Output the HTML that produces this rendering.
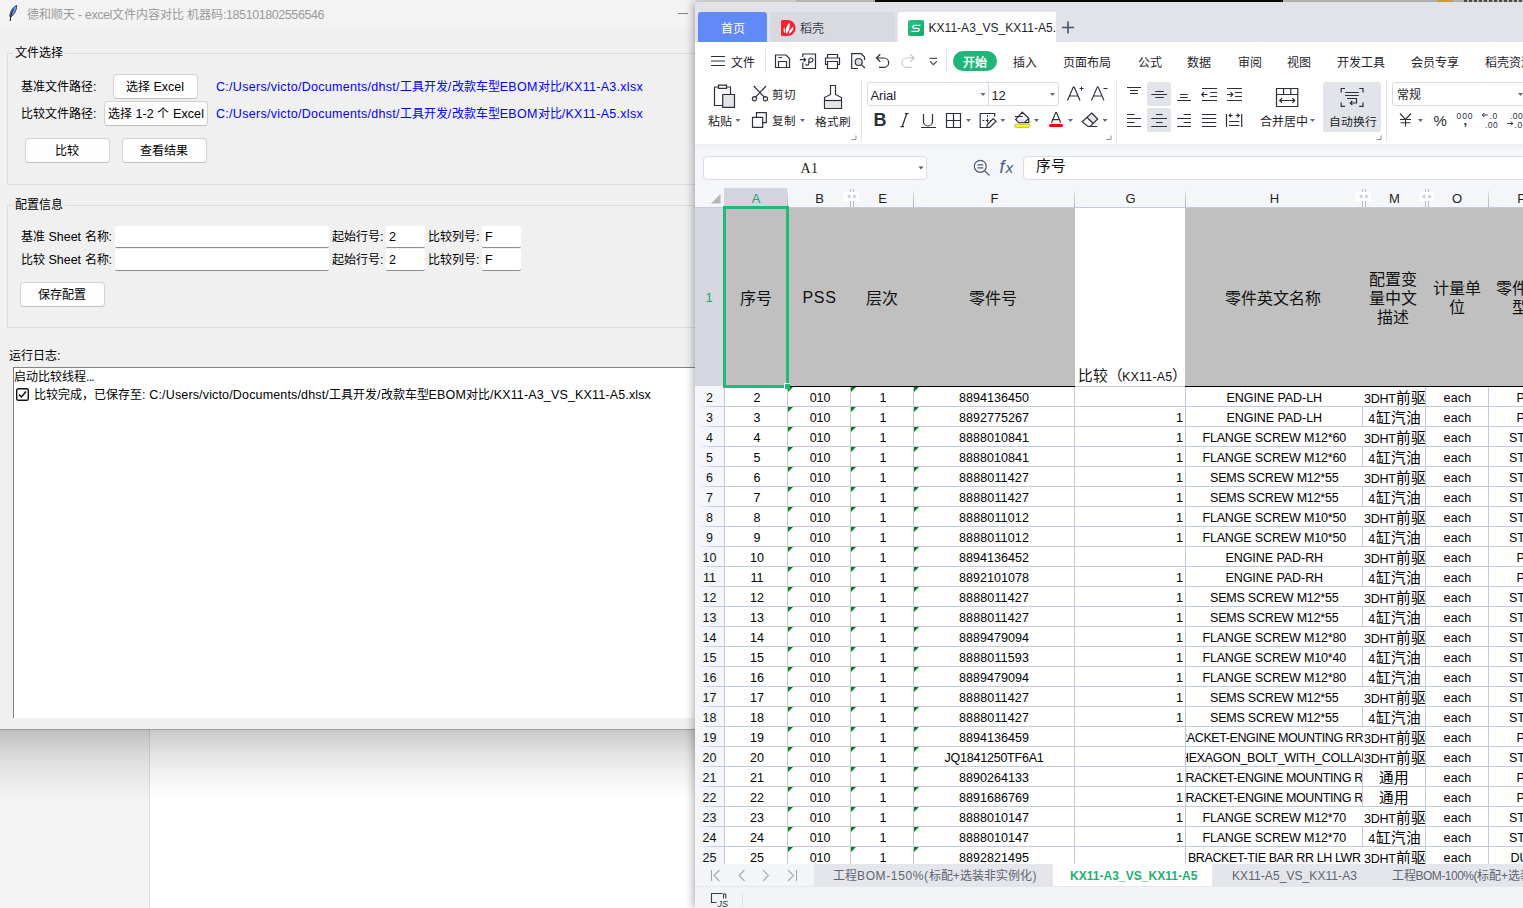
<!DOCTYPE html><html lang="zh-CN"><head><meta charset="utf-8"><title>ui</title><style>*{box-sizing:border-box;margin:0;padding:0}
html,body{width:1523px;height:908px;overflow:hidden;background:#fff}
body{font-family:"Liberation Sans",sans-serif;font-size:12px;color:#000;position:relative}
.a{position:absolute}
.t{position:absolute;white-space:nowrap;font-size:12px}
.k{display:inline-block;letter-spacing:0;white-space:nowrap;text-align:justify;text-align-last:justify;overflow:visible}
.k1{text-align:center;text-align-last:center}
/* desktop */
#side{left:0;top:700px;width:150px;height:208px;background:#f3f3f3;border-right:1px solid #dedede}
#sh{left:0;top:729px;width:700px;height:72px;background:linear-gradient(to bottom,rgba(0,0,0,.36) 0,rgba(0,0,0,.36) 1px,rgba(0,0,0,.215) 1.5px,rgba(0,0,0,.17) 15%,rgba(0,0,0,.115) 33%,rgba(0,0,0,.06) 58%,rgba(0,0,0,.02) 82%,rgba(0,0,0,0))}
#top0{left:0;top:0;width:1523px;height:3px;background:#e6e6e6}
/* tk window */
#tk{left:0;top:0;width:696px;height:729px;background:#f0f0f0;overflow:hidden;border-bottom-left-radius:7px}
#tk .title{left:0;top:0;width:696px;height:29px;background:#f3f3f3}
#tk .lf{border:1px solid #dcdcdc;border-right:none}
#tk .btn{position:absolute;background:#fdfdfd;border:1px solid #d2d2d2;border-bottom-color:#c0c0c0;border-radius:4px;height:25px}
#tk .ent{position:absolute;background:#fff;border-bottom:1px solid #8c8c8c;height:22px;border-radius:2px}
#tk .log{left:13px;top:367px;width:690px;height:351px;background:#fff;border-left:1px solid #828282;border-top:1px solid #828282}
/* wps */
#wps{left:695px;top:2px;width:828px;height:906px;background:#fff;overflow:hidden;box-shadow:-2px 0 8px rgba(0,0,0,.30)}
#pg{left:-695px;top:-2px;width:1523px;height:908px}
#pg svg{position:absolute;overflow:visible;fill:none;stroke:#2b303b;stroke-width:1.2}
#pg .dd{position:absolute;width:0;height:0;border-left:2.6px solid transparent;border-right:2.6px solid transparent;border-top:3.2px solid #5f6a82}
#pg .box{position:absolute;background:#fff;border:1px solid #d9dbe0;border-radius:3px}
#pg .hl{position:absolute;background:#e1e4e9;border-radius:2px}
#pg .sep{position:absolute;width:1px;background:#e3e5e9}
/* grid */
.row{position:absolute;left:695px;width:828px;height:20px}
.hln{position:absolute;left:724px;width:800px;height:1px;background:#c3c9de}
.cell{position:absolute;height:19px;line-height:19px;font-size:12.5px;white-space:nowrap;overflow:hidden;color:#000;text-align:center}
.vl{position:absolute;width:1px;background:#c3c9de}
.tri{position:absolute;width:0;height:0;border-top:5.5px solid #0a7f16;border-right:5.5px solid transparent}
.rh{position:absolute;left:695px;width:29px;text-align:center;font-size:12.5px;color:#111;line-height:19px;height:19px;z-index:2}
</style></head><body>
<div class="a" id="side"></div>
<div class="a" id="top0"><div class="a" style="left:796px;top:0;width:79px;height:2px;background:#cdcdcd"></div><div class="a" style="left:875px;top:0;width:408px;height:2px;background:#0a0a0a"></div><div class="a" style="left:1283px;top:0;width:240px;height:2px;background:#c9c9c9"></div><div class="a" style="left:1437px;top:0;width:16px;height:2px;background:#e3b341"></div><div class="a" style="left:1464px;top:0;width:59px;height:2px;background:repeating-linear-gradient(to right,#555 0,#555 3px,#c9c9c9 3px,#c9c9c9 5px)"></div></div>
<div class="a" id="sh"></div>
<div class="a" id="tk">
<div class="a title"></div>
<svg class="a" style="left:8px;top:5px" width="10" height="17" viewBox="0 0 10 17"><path d="M8.6.6C5.5 1.6 2.2 6 1.8 11.2L2.6 12C5.8 10.2 8.8 5.2 8.6.6Z" fill="#6ea4f0" stroke="#1b2a4a" stroke-width=".9"/><path d="M5.6 4.2C3.6 7.6 2.6 11 2.2 16" fill="none" stroke="#10131c" stroke-width="1"/></svg>
<div class="t" style="left:27px;top:6.5px;font-size:12.5px;line-height:16px;height:16px;letter-spacing:-0.421px;color:#9a9a9a;"><span class="k" style="width:48px;font-size:12px">德和顺天</span> - excel<span class="k" style="width:72px;font-size:12px">文件内容对比</span> <span class="k" style="width:36px;font-size:12px">机器码</span>:185101802556546</div>
<div class="a" style="left:678px;top:13px;width:10px;height:1px;background:#858585"></div>
<div class="a lf" style="left:7px;top:53px;width:700px;height:132px"></div>
<div class="t" style="left:13px;top:45px;font-size:12.5px;line-height:16px;height:16px;background:#f0f0f0;padding:0 2px;"><span class="k" style="width:48px;font-size:12px">文件选择</span></div>
<div class="t" style="left:21px;top:79px;font-size:12.5px;line-height:16px;height:16px;letter-spacing:-0.473px;"><span class="k" style="width:72px;font-size:12px">基准文件路径</span>:</div>
<div class="btn" style="left:113px;top:74px;width:85px"></div><div class="t" style="left:126px;top:79px;font-size:12.5px;line-height:16px;height:16px;letter-spacing:-0.007px;"><span class="k" style="width:24px;font-size:12px">选择</span> Excel</div>
<div class="t" style="left:216px;top:79px;font-size:12.5px;line-height:16px;height:16px;letter-spacing:0.293px;color:#0000ff;">C:/Users/victo/Documents/dhst/<span class="k" style="width:48px;font-size:12px">工具开发</span>/<span class="k" style="width:48px;font-size:12px">改款车型</span>EBOM<span class="k" style="width:24px;font-size:12px">对比</span>/KX11-A3.xlsx</div>
<div class="t" style="left:21px;top:106px;font-size:12.5px;line-height:16px;height:16px;letter-spacing:-0.473px;"><span class="k" style="width:72px;font-size:12px">比较文件路径</span>:</div>
<div class="btn" style="left:104px;top:101px;width:104px"></div><div class="t" style="left:108px;top:106px;font-size:12.5px;line-height:16px;height:16px;letter-spacing:0.086px;"><span class="k" style="width:24px;font-size:12px">选择</span> 1-2 <span class="k k1" style="width:12px;font-size:12px">个</span> Excel</div>
<div class="t" style="left:216px;top:106px;font-size:12.5px;line-height:16px;height:16px;letter-spacing:0.293px;color:#0000ff;">C:/Users/victo/Documents/dhst/<span class="k" style="width:48px;font-size:12px">工具开发</span>/<span class="k" style="width:48px;font-size:12px">改款车型</span>EBOM<span class="k" style="width:24px;font-size:12px">对比</span>/KX11-A5.xlsx</div>
<div class="btn" style="left:25px;top:138px;width:85px"></div><div class="t" style="left:55px;top:143px;font-size:12.5px;line-height:16px;height:16px;"><span class="k" style="width:24px;font-size:12px">比较</span></div>
<div class="btn" style="left:122px;top:138px;width:85px"></div><div class="t" style="left:140px;top:143px;font-size:12.5px;line-height:16px;height:16px;"><span class="k" style="width:48px;font-size:12px">查看结果</span></div>
<div class="a lf" style="left:7px;top:205px;width:700px;height:123px"></div>
<div class="t" style="left:13px;top:197px;font-size:12.5px;line-height:16px;height:16px;background:#f0f0f0;padding:0 2px;"><span class="k" style="width:48px;font-size:12px">配置信息</span></div>
<div class="t" style="left:21px;top:229px;font-size:12.5px;line-height:16px;height:16px;letter-spacing:-0.011px;"><span class="k" style="width:24px;font-size:12px">基准</span> Sheet <span class="k" style="width:24px;font-size:12px">名称</span>:</div>
<div class="ent" style="left:115px;top:226px;width:214px"></div>
<div class="t" style="left:332px;top:229px;font-size:12.5px;line-height:16px;height:16px;letter-spacing:-0.473px;"><span class="k" style="width:48px;font-size:12px">起始行号</span>:</div>
<div class="ent" style="left:386px;top:226px;width:39px"></div><div class="t" style="left:389px;top:229px;font-size:12.5px;line-height:16px;height:16px;">2</div>
<div class="t" style="left:428px;top:229px;font-size:12.5px;line-height:16px;height:16px;letter-spacing:-0.473px;"><span class="k" style="width:48px;font-size:12px">比较列号</span>:</div>
<div class="ent" style="left:482px;top:226px;width:39px"></div><div class="t" style="left:485px;top:229px;font-size:12.5px;line-height:16px;height:16px;">F</div>
<div class="t" style="left:21px;top:252px;font-size:12.5px;line-height:16px;height:16px;letter-spacing:-0.011px;"><span class="k" style="width:24px;font-size:12px">比较</span> Sheet <span class="k" style="width:24px;font-size:12px">名称</span>:</div>
<div class="ent" style="left:115px;top:249px;width:214px"></div>
<div class="t" style="left:332px;top:252px;font-size:12.5px;line-height:16px;height:16px;letter-spacing:-0.473px;"><span class="k" style="width:48px;font-size:12px">起始行号</span>:</div>
<div class="ent" style="left:386px;top:249px;width:39px"></div><div class="t" style="left:389px;top:252px;font-size:12.5px;line-height:16px;height:16px;">2</div>
<div class="t" style="left:428px;top:252px;font-size:12.5px;line-height:16px;height:16px;letter-spacing:-0.473px;"><span class="k" style="width:48px;font-size:12px">比较列号</span>:</div>
<div class="ent" style="left:482px;top:249px;width:39px"></div><div class="t" style="left:485px;top:252px;font-size:12.5px;line-height:16px;height:16px;">F</div>
<div class="btn" style="left:20px;top:282px;width:85px"></div><div class="t" style="left:38px;top:287px;font-size:12.5px;line-height:16px;height:16px;"><span class="k" style="width:48px;font-size:12px">保存配置</span></div>
<div class="t" style="left:9px;top:348px;font-size:12.5px;line-height:16px;height:16px;letter-spacing:-0.473px;"><span class="k" style="width:48px;font-size:12px">运行日志</span>:</div>
<div class="a log"></div>
<div class="t" style="left:14px;top:368.5px;font-size:12.5px;line-height:16px;height:16px;letter-spacing:-0.806px;"><span class="k" style="width:72px;font-size:12px">启动比较线程</span>...</div>
<svg class="a" style="left:16px;top:388px" width="13" height="13" viewBox="0 0 13 13"><rect x=".7" y=".7" width="11.6" height="11.6" rx="1.6" fill="#fff" stroke="#111" stroke-width="1.4"/><path d="M3 6.600L5.400 9L10 3.600" fill="none" stroke="#111" stroke-width="1.500"/></svg>
<div class="t" style="left:34px;top:386.5px;font-size:12.5px;line-height:16px;height:16px;letter-spacing:0.155px;"><span class="k" style="width:108px;font-size:12px">比较完成，已保存至</span>: C:/Users/victo/Documents/dhst/<span class="k" style="width:48px;font-size:12px">工具开发</span>/<span class="k" style="width:48px;font-size:12px">改款车型</span>EBOM<span class="k" style="width:24px;font-size:12px">对比</span>/KX11-A3_VS_KX11-A5.xlsx</div>
</div>
<div class="a" id="wps"><div class="a" id="pg">
<div class="a" style="left:695px;top:2px;width:828px;height:40px;background:#e1e3e8"></div>
<div class="a" style="left:698px;top:12px;width:69px;height:30px;background:#628af6;border-radius:3px 3px 0 0"></div>
<div class="t" style="left:721px;top:20.5px;font-size:12px;line-height:16px;height:16px;color:#fff;"><span class="k" style="width:24px">首页</span></div>
<div class="a" style="left:770px;top:12px;width:125px;height:30px;background:#d8dadf;border-radius:3px 3px 0 0"></div>
<svg style="left:781px;top:20px" width="16" height="16" viewBox="0 0 16 16"><path d="M0 1.500A1.500 1.500 0 0 1 1.500 0H6.500A8 8 0 0 1 6.500 16H1.500A1.500 1.500 0 0 1 0 14.500Z" fill="#f5222d" stroke="none"/><path d="M5.300 13.800C4 10.500 5.200 5.500 8.600 2.800C9.300 6.800 8.200 11.300 5.300 13.800ZM3.500 13C2.300 11.300 2.300 9 3.200 7.200C4.300 9 4.500 11.300 3.500 13ZM7.600 13.800C8 10.800 9.800 8 12.600 7C12.300 10 10.500 12.800 7.600 13.800Z" fill="#fff" stroke="none"/></svg>
<div class="t" style="left:800px;top:20.5px;font-size:12px;line-height:16px;height:16px;color:#3a3f4a;"><span class="k" style="width:24px">稻壳</span></div>
<div class="a" style="left:898px;top:12px;width:158px;height:30px;background:#fff;border-radius:3px 0 0 0"></div>
<div class="a" style="left:908px;top:20px;width:16px;height:16px;background:linear-gradient(135deg,#2bc281,#12a868);border-radius:2px"></div>
<svg style="left:908px;top:20px" width="16" height="16" viewBox="0 0 16 16"><path d="M12.500 5.300H6.300A1.500 1.500 0 0 0 6.300 8.300H9.700A1.500 1.500 0 0 1 9.700 11.300H3.500" stroke="#fff" stroke-width="1.300"/></svg>
<div class="t" style="left:928.5px;top:19.5px;font-size:12px;line-height:16px;height:16px;letter-spacing:0.028px;color:#1b1f27;width:127.5px;overflow:hidden;">KX11-A3_VS_KX11-A5.</div>
<svg style="left:0;top:0" width="1523" height="908"><path d="M1062 27.500H1074M1068 21.500V33.500" stroke="#46516d" stroke-width="1.600"/></svg>
<div class="a" style="left:695px;top:42px;width:828px;height:102px;background:#fff"></div>
<div class="a" style="left:695px;top:144px;width:828px;height:44px;background:linear-gradient(to bottom,#eceef2 0,#f5f6f9 6px)"></div>
<div class="t" style="left:731px;top:54.5px;font-size:12px;line-height:16px;height:16px;color:#1f2329;"><span class="k" style="width:24px">文件</span></div>
<div class="sep" style="left:765px;top:49px;height:24px"></div>
<div class="sep" style="left:946px;top:49px;height:24px"></div>
<div class="a" style="left:953px;top:51px;width:44px;height:20px;border-radius:10px;background:#20b679"></div>
<div class="t" style="left:963px;top:54.5px;font-size:12px;line-height:16px;height:16px;font-weight:bold;color:#fff;"><span class="k" style="width:24px">开始</span></div>
<div class="t" style="left:1013px;top:54.5px;font-size:12px;line-height:16px;height:16px;color:#1f2329;"><span class="k" style="width:24px">插入</span></div>
<div class="t" style="left:1063px;top:54.5px;font-size:12px;line-height:16px;height:16px;color:#1f2329;"><span class="k" style="width:48px">页面布局</span></div>
<div class="t" style="left:1137.5px;top:54.5px;font-size:12px;line-height:16px;height:16px;color:#1f2329;"><span class="k" style="width:24px">公式</span></div>
<div class="t" style="left:1187px;top:54.5px;font-size:12px;line-height:16px;height:16px;color:#1f2329;"><span class="k" style="width:24px">数据</span></div>
<div class="t" style="left:1237.5px;top:54.5px;font-size:12px;line-height:16px;height:16px;color:#1f2329;"><span class="k" style="width:24px">审阅</span></div>
<div class="t" style="left:1286.5px;top:54.5px;font-size:12px;line-height:16px;height:16px;color:#1f2329;"><span class="k" style="width:24px">视图</span></div>
<div class="t" style="left:1336.5px;top:54.5px;font-size:12px;line-height:16px;height:16px;color:#1f2329;"><span class="k" style="width:48px">开发工具</span></div>
<div class="t" style="left:1411px;top:54.5px;font-size:12px;line-height:16px;height:16px;color:#1f2329;"><span class="k" style="width:48px">会员专享</span></div>
<div class="t" style="left:1484.5px;top:54.5px;font-size:12px;line-height:16px;height:16px;color:#1f2329;"><span class="k" style="width:48px">稻壳资源</span></div>
<div class="hl" style="left:1147px;top:82px;width:24px;height:24px"></div>
<div class="hl" style="left:1147px;top:108px;width:24px;height:24px"></div>
<div class="hl" style="left:1323px;top:82px;width:58px;height:50px"></div>
<div class="sep" style="left:861px;top:80px;height:62px"></div>
<div class="sep" style="left:1116px;top:80px;height:62px"></div>
<div class="sep" style="left:1386px;top:80px;height:62px"></div>
<div class="box" style="left:867px;top:82px;width:192px;height:24px"></div>
<div class="a" style="left:988px;top:83px;width:1px;height:22px;background:#d9dbe0"></div>
<div class="box" style="left:1392px;top:82px;width:140px;height:24px"></div>
<div class="t" style="left:870.5px;top:86.5px;font-size:13px;line-height:17px;height:17px;letter-spacing:-0.102px;color:#1f2329;">Arial</div>
<div class="t" style="left:991.5px;top:86.5px;font-size:13px;line-height:17px;height:17px;letter-spacing:-0.23px;color:#1f2329;">12</div>
<div class="t" style="left:1396.5px;top:86.5px;font-size:12px;line-height:16px;height:16px;color:#1f2329;"><span class="k" style="width:24px">常规</span></div>
<div class="t" style="left:708px;top:113.5px;font-size:12px;line-height:16px;height:16px;color:#1f2329;"><span class="k" style="width:24px">粘贴</span></div>
<div class="t" style="left:771.5px;top:87.5px;font-size:11.5px;line-height:15.5px;height:15.5px;color:#1f2329;"><span class="k" style="width:23px">剪切</span></div>
<div class="t" style="left:771.5px;top:113.5px;font-size:11.5px;line-height:15.5px;height:15.5px;color:#1f2329;"><span class="k" style="width:23px">复制</span></div>
<div class="t" style="left:815px;top:113.5px;font-size:11.7px;line-height:15.7px;height:15.7px;color:#1f2329;"><span class="k" style="width:35.1px">格式刷</span></div>
<div class="t" style="left:1259.5px;top:113.5px;font-size:12px;line-height:16px;height:16px;color:#1f2329;"><span class="k" style="width:48px">合并居中</span></div>
<div class="t" style="left:1328.5px;top:114.5px;font-size:11.8px;line-height:15.8px;height:15.8px;color:#1f2329;"><span class="k" style="width:47.2px">自动换行</span></div>
<div class="t" style="left:873.5px;top:109px;font-size:18px;line-height:22px;height:22px;font-weight:bold;color:#2b303b;">B</div>
<div class="t" style="left:1433.5px;top:110.5px;font-size:15px;line-height:19px;height:19px;color:#2b303b;">%</div>
<div class="t" style="left:1456.5px;top:110px;font-size:8.5px;line-height:12px;height:12px;letter-spacing:0.939px;color:#2b303b;">000</div>
<div class="t" style="left:1463.5px;top:113px;font-size:13px;line-height:16px;height:16px;font-weight:bold;color:#2b303b;">,</div>
<div class="t" style="left:1489.5px;top:110px;font-size:8.5px;line-height:12px;height:12px;letter-spacing:0.706px;color:#2b303b;">.0</div>
<div class="t" style="left:1485px;top:118.5px;font-size:8.5px;line-height:12px;height:12px;letter-spacing:0.395px;color:#2b303b;">.00</div>
<div class="t" style="left:1510px;top:110px;font-size:8.5px;line-height:12px;height:12px;letter-spacing:0.395px;color:#2b303b;">.00</div>
<div class="t" style="left:1514.5px;top:118.5px;font-size:8.5px;line-height:12px;height:12px;letter-spacing:0.706px;color:#2b303b;">.0</div>
<svg style="left:0;top:0" width="1523" height="908" stroke-linejoin="miter"><path d="M980.5 93h5l-2.500 3.100z" fill="#5f6a82" stroke="none"/><path d="M1050 93h5l-2.500 3.100z" fill="#5f6a82" stroke="none"/><path d="M1518 93h5l-2.500 3.100z" fill="#5f6a82" stroke="none"/><path d="M735.5 119h5l-2.500 3.100z" fill="#5f6a82" stroke="none"/><path d="M800 119h5l-2.500 3.100z" fill="#5f6a82" stroke="none"/><path d="M966 119h5l-2.500 3.100z" fill="#5f6a82" stroke="none"/><path d="M1000.3 119h5l-2.500 3.100z" fill="#5f6a82" stroke="none"/><path d="M1034 119h5l-2.500 3.100z" fill="#5f6a82" stroke="none"/><path d="M1068 119h5l-2.500 3.100z" fill="#5f6a82" stroke="none"/><path d="M1102.5 119h5l-2.500 3.100z" fill="#5f6a82" stroke="none"/><path d="M1310 119h5l-2.500 3.100z" fill="#5f6a82" stroke="none"/><path d="M1418 119h5l-2.500 3.100z" fill="#5f6a82" stroke="none"/><path d="M711 56.500H725M711 61H725M711 65.500H725"/><path d="M775.500 55H786L789.500 58.500V67.500H775.500ZM778.500 67.500V61.500H786.500V67.500M778.500 57.500H782"/><path d="M802.800 57V54H815.500V68.500H802.800V62.500M799.800 59.700H805.500M803.700 57.700L805.700 59.700L803.700 61.700M805.800 63.800C805.800 65.800 808.800 65.800 808.800 63.600V60C808.800 57.300 813 57.300 813 60C813 62.300 810 62.500 808.900 61.900"/><path d="M827.500 58V54.500H837.500V58M827.500 64.500H825.500V58H839.500V64.500H837.500M827.500 61.500H837.500V68.500H827.500Z"/><path d="M864.500 60V57L861.200 53.700H851.700V68.500H858"/><path d="M862.200 62A3.500 3.500 0 1 1 855.200 62A3.500 3.500 0 1 1 862.200 62Z" fill="#dcdde0"/><path d="M861.300 64.600L865 68"/><path d="M880.300 54.300L876.500 58L880.300 61.700M876.800 58H884A4.600 4.600 0 0 1 884 67.300H879"/><path d="M910.300 54.300L914.100 58L910.300 61.700M913.800 58H906.600A4.600 4.600 0 0 0 906.600 67.300H911.500" stroke="#c3c6cc"/><path d="M929.700 58.300H937M929.900 61.200L933.350 64.600L936.800 61.200" stroke="#4a4f5a"/><path d="M718.500 87H714.500V105.500H722.500M726.500 87H730.500V94"/><path d="M718.500 85.200H726.500V88.300H718.500Z" fill="#fff"/><path d="M722.700 94.500H734.500V107.300H722.700Z" fill="#e4e5e7"/><path d="M753.700 86L764.300 97.200M766 86L755.500 97.200"/><path d="M756.600 98.700A2.100 2.100 0 1 1 752.400 98.700A2.100 2.100 0 1 1 756.600 98.700ZM767.500 98.700A2.100 2.100 0 1 1 763.300 98.700A2.100 2.100 0 1 1 767.500 98.700Z"/><path d="M756.500 117V112.700H766.300V122.700H762.800"/><path d="M752.500 117.300H762.700V127.300H752.500Z"/><path d="M830.500 85.500H835.500V94.500L841.500 97.500V108.300H824.500V97.500L830.500 94.500Z"/><path d="M825 101H841V107.800H825Z" fill="#e4e5e7" stroke="none"/><path d="M824.500 100.500H841.500"/><path d="M856 135.5V139.5H851.5" stroke="#8a8f99" stroke-width="1"/><path d="M1111 135.5V139.5H1106.5" stroke="#8a8f99" stroke-width="1"/><path d="M1381 135.5V139.5H1376.5" stroke="#8a8f99" stroke-width="1"/><path d="M1067.500 100.500L1073.300 87H1074.200L1080 100.500M1069.600 96H1077.900"/><path d="M1079.500 88.500H1083.500M1081.500 86.500V90.500" stroke-width="1"/><path d="M1091.500 100.500L1097.300 87H1098.200L1104 100.500M1093.600 96H1101.900M1103.500 88.500H1107.500" stroke-width="1.100"/><path d="M906.800 113.500L902.200 126.500M905 113.500H908.600M900.400 126.500H904" stroke-width="1.250"/><path d="M923.500 114V121.500A4.500 4.500 0 0 0 932.500 121.500V114M921 127.500H936"/><path d="M946.500 113.500H960.500V127.500H946.500ZM953.500 113.500V127.500M946.500 120.500H960.500"/><path d="M994.700 116.700V113.500H980.200V127.500H988.500"/><path d="M982.400 120.500H984.400M985.700 120.500H988.700M989.900 120.500H990.900M987.500 115V117M987.500 118.300V122.700" stroke-width="1"/><path d="M993.300 118.600L996 121.300L989.800 127.400H987.100V124.700Z" fill="#fff"/><path d="M1022.300 112.200L1028.800 118.200V122.600H1018.700L1015.600 119.500ZM1015 116.500H1022.800M1028.800 118.200L1024.300 122.600"/><path d="M1017.800 119.300H1026.800L1023.600 122.300H1019.300Z" fill="#dfe0e3" stroke="none"/><path d="M1016.200 124.100H1028.200A1.700 1.700 0 0 1 1028.200 127.500H1016.200A1.700 1.700 0 0 1 1016.200 124.100Z" fill="#ffff00" stroke="#a3a38a" stroke-width=".7"/><path d="M1051.500 122.700L1055.700 112.500H1056.500L1060.700 122.700M1053 119.700H1059.200" stroke-width="1.200"/><path d="M1050.600 125.500H1061.300" stroke="#ff0000" stroke-width="3.200" stroke-linecap="round"/><path d="M1087.300 117.300L1091.700 113L1097.600 119L1093.400 123.300Z" fill="#e3e4e6" stroke="none"/><path d="M1091.700 113L1097.700 119L1090.300 126.400H1088L1082.200 121.800ZM1087 117.500L1093.300 123.500M1089.500 126.500H1097.300"/><path d="M1127 87.500H1141M1130 90.500H1138M1130 93.500H1138"/><path d="M1155.300 91.500H1163.600M1151.300 94.500H1167M1155.300 97.500H1163.600"/><path d="M1180 94.500H1187.700M1180 97.500H1187.700M1177 100.500H1191"/><path d="M1202 88.500H1217M1202 100.500H1217M1210 92.500H1217M1210 96.500H1217M1201.700 94.500H1207.500M1204 92.200L1201.700 94.500L1204 96.800"/><path d="M1227 88.500H1242M1227 100.500H1242M1235 92.500H1242M1235 96.500H1242M1227 94.500H1232.800M1230.500 92.200L1232.800 94.500L1230.500 96.800"/><path d="M1127 114.500H1134.600M1127 118.500H1141M1127 122.500H1134.600M1127 126.500H1141"/><path d="M1156 114.500H1162.600M1151.300 118.500H1167M1156 122.500H1162.600M1151.300 126.500H1167"/><path d="M1183.600 114.500H1191M1177 118.500H1191M1183.600 122.500H1191M1177 126.500H1191"/><path d="M1202 114.500H1216.300M1202 118.500H1216.300M1202 122.500H1216.300M1202 126.500H1216.300"/><path d="M1226.500 114V127M1241.700 114V127M1229 121.500H1239.400M1229 125.500H1239.400M1229.200 115.500H1232.700M1235.700 115.500H1239.200M1231 113.700L1229.200 115.500L1231 117.300M1237.400 113.700L1239.200 115.500L1237.400 117.300"/><path d="M1276.500 88.500H1297.800V106.500H1276.500ZM1276.500 94.500H1297.800M1283.600 88.500V94.500M1290.800 88.500V94.500M1279.700 100.500H1294.700M1282 98.300L1279.700 100.500L1282 102.700M1292.400 98.300L1294.700 100.500L1292.400 102.700"/><path d="M1345 88.500H1341.200V92.500M1359.200 88.500H1363V92.500M1341.200 102.500V106.300H1345M1363 102.500V106.300H1359.200M1345.200 92.500H1358.800M1345.200 95.500H1358.800M1347 98.500H1356.500V103H1350.300M1352.300 101L1350.300 103L1352.300 105"/><path d="M1400 113.500L1405.500 119.500L1411 113.500M1405.500 119.500V126.500M1400 119.500H1411M1400.500 122.700H1410.500" stroke-width="1.150"/><path d="M1482.300 115H1487.800M1484.300 113L1482.300 115L1484.300 117" stroke-width="1"/><path d="M1507.300 123.500H1512.800M1510.800 121.500L1512.800 123.500L1510.800 125.500" stroke-width="1"/></svg>
<div class="box" style="left:703px;top:156px;width:224px;height:24px;border-radius:4px"></div>
<div class="t" style="left:800.5px;top:159.5px;font-size:14px;line-height:18px;height:18px;color:#222;font-family:'Liberation Serif',serif;letter-spacing:.5px;">A1</div>
<svg style="left:0;top:0" width="1523" height="908"><path d="M918.500 166.500h5l-2.500 3.100z" fill="#555b66" stroke="none"/></svg>
<div class="box" style="left:1023px;top:156px;width:520px;height:24px;border-radius:4px"></div>
<div class="t" style="left:1035.5px;top:158px;font-size:14.67px;line-height:17px;height:17px;color:#111;"><span class="k" style="width:29.34px">序号</span></div>
<svg style="left:0;top:0" width="1523" height="908"><path d="M986.300 166.300A6 6 0 1 1 974.300 166.300A6 6 0 1 1 986.300 166.300ZM984.600 170.800L989.500 175.500M977.500 164.800H983.200M977.500 167.800H983.200" stroke="#4d5a78" stroke-width="1.200"/></svg>
<div class="t" style="left:999.5px;top:157px;font-size:18px;line-height:20px;height:20px;color:#4d5a78;font-style:italic;">f</div>
<div class="t" style="left:1005.5px;top:159px;font-size:15.5px;line-height:18px;height:18px;color:#4d5a78;font-style:italic;">x</div>
<div class="a" style="left:695px;top:188px;width:828px;height:19px;background:#f5f6f9"></div>
<div class="a" style="left:724px;top:188px;width:63px;height:19px;background:#d2d5de"></div>
<svg style="left:0;top:0" width="1523" height="908"><path d="M720.500 194V203.500H711Z" fill="#b4b6ba" stroke="none"/></svg>
<div class="t" style="left:724px;top:190px;font-size:13px;line-height:18px;height:18px;color:#21a56b;width:64px;text-align:center;">A</div>
<div class="t" style="left:788px;top:190px;font-size:13px;line-height:18px;height:18px;color:#1f1f1f;width:63px;text-align:center;">B</div>
<div class="t" style="left:851px;top:190px;font-size:13px;line-height:18px;height:18px;color:#1f1f1f;width:63px;text-align:center;">E</div>
<div class="t" style="left:914px;top:190px;font-size:13px;line-height:18px;height:18px;color:#1f1f1f;width:161px;text-align:center;">F</div>
<div class="t" style="left:1075px;top:190px;font-size:13px;line-height:18px;height:18px;color:#1f1f1f;width:111px;text-align:center;">G</div>
<div class="t" style="left:1186px;top:190px;font-size:13px;line-height:18px;height:18px;color:#1f1f1f;width:177px;text-align:center;">H</div>
<div class="t" style="left:1363px;top:190px;font-size:13px;line-height:18px;height:18px;color:#1f1f1f;width:63px;text-align:center;">M</div>
<div class="t" style="left:1426px;top:190px;font-size:13px;line-height:18px;height:18px;color:#1f1f1f;width:62px;text-align:center;">O</div>
<div class="t" style="left:1488px;top:190px;font-size:13px;line-height:18px;height:18px;color:#1f1f1f;width:67px;text-align:center;">P</div>
<div class="a" style="left:787px;top:189px;width:1px;height:18px;background:linear-gradient(to bottom,rgba(170,176,200,0),rgba(170,176,200,.55) 40%,#aab0c8)"></div>
<div class="a" style="left:913px;top:189px;width:1px;height:18px;background:linear-gradient(to bottom,rgba(170,176,200,0),rgba(170,176,200,.55) 40%,#aab0c8)"></div>
<div class="a" style="left:1074px;top:189px;width:1px;height:18px;background:linear-gradient(to bottom,rgba(170,176,200,0),rgba(170,176,200,.55) 40%,#aab0c8)"></div>
<div class="a" style="left:1185px;top:189px;width:1px;height:18px;background:linear-gradient(to bottom,rgba(170,176,200,0),rgba(170,176,200,.55) 40%,#aab0c8)"></div>
<div class="a" style="left:1488px;top:189px;width:1px;height:18px;background:linear-gradient(to bottom,rgba(170,176,200,0),rgba(170,176,200,.55) 40%,#aab0c8)"></div>
<div class="a" style="left:850px;top:189px;width:4px;height:18px;border-left:1px solid #b4bace;border-right:1px solid #b4bace"></div>
<div class="a" style="left:844px;top:192px;width:15px;height:9px;background:#fff;border-radius:1px"></div>
<svg style="left:0;top:0" width="1523" height="908"><path d="M850.2 194.200L846.8 196.500L850.2 198.800ZM853.4 194.200L856.8 196.500L853.4 198.800Z" fill="#c3c6ce" stroke="none"/></svg>
<div class="a" style="left:1362px;top:189px;width:4px;height:18px;border-left:1px solid #b4bace;border-right:1px solid #b4bace"></div>
<div class="a" style="left:1356px;top:192px;width:15px;height:9px;background:#fff;border-radius:1px"></div>
<svg style="left:0;top:0" width="1523" height="908"><path d="M1362.2 194.200L1358.8 196.500L1362.2 198.800ZM1365.4 194.200L1368.8 196.500L1365.4 198.800Z" fill="#c3c6ce" stroke="none"/></svg>
<div class="a" style="left:1425px;top:189px;width:4px;height:18px;border-left:1px solid #b4bace;border-right:1px solid #b4bace"></div>
<div class="a" style="left:1419px;top:192px;width:15px;height:9px;background:#fff;border-radius:1px"></div>
<svg style="left:0;top:0" width="1523" height="908"><path d="M1425.2 194.200L1421.8 196.500L1425.2 198.800ZM1428.4 194.200L1431.8 196.500L1428.4 198.800Z" fill="#c3c6ce" stroke="none"/></svg>
<div class="a" style="left:695px;top:207px;width:828px;height:1px;background:#c6cad8"></div>
<div class="a" style="left:695px;top:208px;width:29px;height:656px;background:#f4f6f9"></div>
<div class="a" style="left:695px;top:208px;width:29px;height:178px;background:#d5d8e0"></div>
<div class="t" style="left:695px;top:289px;font-size:13px;line-height:18px;height:18px;color:#21a56b;width:28px;text-align:center;">1</div>
<div class="a" style="left:724px;top:208px;width:351px;height:178px;background:#c0c0c0"></div>
<div class="a" style="left:1185px;top:208px;width:340px;height:178px;background:#c0c0c0"></div>
<div class="t" style="left:724px;top:290px;font-size:16px;line-height:18px;height:18px;color:#111;width:64px;text-align:center;"><span class="k" style="width:32px">序号</span></div>
<div class="t" style="left:788px;top:289px;font-size:16px;line-height:18px;height:18px;letter-spacing:0.7px;color:#111;width:63px;text-align:center;">PSS</div>
<div class="t" style="left:849px;top:290px;font-size:16px;line-height:18px;height:18px;color:#111;width:65px;text-align:center;"><span class="k" style="width:32px">层次</span></div>
<div class="t" style="left:911px;top:290px;font-size:16px;line-height:18px;height:18px;color:#111;width:164px;text-align:center;"><span class="k" style="width:48px">零件号</span></div>
<div class="t" style="left:1183px;top:290px;font-size:16px;line-height:18px;height:18px;color:#111;width:180px;text-align:center;"><span class="k" style="width:96px">零件英文名称</span></div>
<div class="t" style="left:1360px;top:271px;font-size:16px;line-height:18px;height:18px;color:#111;width:66px;text-align:center;"><span class="k" style="width:48px">配置变</span></div>
<div class="t" style="left:1360px;top:290px;font-size:16px;line-height:18px;height:18px;color:#111;width:66px;text-align:center;"><span class="k" style="width:48px">量中文</span></div>
<div class="t" style="left:1360px;top:309px;font-size:16px;line-height:18px;height:18px;color:#111;width:66px;text-align:center;"><span class="k" style="width:32px">描述</span></div>
<div class="t" style="left:1426px;top:280px;font-size:16px;line-height:18px;height:18px;color:#111;width:62px;text-align:center;"><span class="k" style="width:48px">计量单</span></div>
<div class="t" style="left:1426px;top:299px;font-size:16px;line-height:18px;height:18px;color:#111;width:62px;text-align:center;"><span class="k k1" style="width:16px">位</span></div>
<div class="t" style="left:1488px;top:280px;font-size:16px;line-height:18px;height:18px;color:#111;width:64px;text-align:center;"><span class="k" style="width:48px">零件类</span></div>
<div class="t" style="left:1488px;top:299px;font-size:16px;line-height:18px;height:18px;color:#111;width:64px;text-align:center;"><span class="k k1" style="width:16px">型</span></div>
<div class="t" style="left:1078px;top:366.5px;font-size:12.5px;line-height:19px;height:19px;letter-spacing:0.188px;color:#111;"><span class="k" style="width:44.01px;font-size:14.67px">比较（</span>KX11-A5<span class="k k1" style="width:14.67px;font-size:14.67px">）</span></div>
<div class="hln" style="top:406px;left:695px;width:828px"></div>
<div class="rh" style="top:389px">2</div>
<div class="cell" style="left:726px;top:389px;width:62px;text-align:center;">2</div>
<div class="cell" style="left:789px;top:389px;width:62px;text-align:center;letter-spacing:-0.119px;">010</div>
<div class="cell" style="left:852px;top:389px;width:62px;text-align:center;">1</div>
<div class="cell" style="left:914px;top:389px;width:160px;text-align:center;letter-spacing:0.048px;">8894136450</div>
<div class="cell" style="left:1186px;top:389px;width:176.5px;text-align:center;letter-spacing:-0.063px;">ENGINE PAD-LH</div>
<div class="cell" style="left:1361px;top:389px;width:67px;text-align:center;letter-spacing:-0.246px;overflow:visible;">3DHT<span class="k" style="width:29.34px;font-size:14.67px">前驱</span></div>
<div class="cell" style="left:1427px;top:389px;width:61px;text-align:center;letter-spacing:0.223px;">each</div>
<div class="cell" style="left:1516.5px;top:389px;width:43.5px;text-align:left;">P</div>
<div class="tri" style="left:788px;top:387px"></div>
<div class="tri" style="left:851px;top:387px"></div>
<div class="tri" style="left:914px;top:387px"></div>
<div class="hln" style="top:426px;left:695px;width:828px"></div>
<div class="rh" style="top:409px">3</div>
<div class="cell" style="left:726px;top:409px;width:62px;text-align:center;">3</div>
<div class="cell" style="left:789px;top:409px;width:62px;text-align:center;letter-spacing:-0.119px;">010</div>
<div class="cell" style="left:852px;top:409px;width:62px;text-align:center;">1</div>
<div class="cell" style="left:914px;top:409px;width:160px;text-align:center;letter-spacing:0.048px;">8892775267</div>
<div class="cell" style="left:1076px;top:409px;width:110px;text-align:right;padding-right:3px;">1</div>
<div class="cell" style="left:1186px;top:409px;width:176.5px;text-align:center;letter-spacing:-0.063px;">ENGINE PAD-LH</div>
<div class="cell" style="left:1363px;top:409px;width:62px;text-align:center;letter-spacing:0.538px;">4<span class="k" style="width:44.01px;font-size:14.67px">缸汽油</span></div>
<div class="cell" style="left:1427px;top:409px;width:61px;text-align:center;letter-spacing:0.223px;">each</div>
<div class="cell" style="left:1516.5px;top:409px;width:43.5px;text-align:left;">P</div>
<div class="tri" style="left:788px;top:407px"></div>
<div class="tri" style="left:851px;top:407px"></div>
<div class="tri" style="left:914px;top:407px"></div>
<div class="hln" style="top:446px;left:695px;width:828px"></div>
<div class="rh" style="top:429px">4</div>
<div class="cell" style="left:726px;top:429px;width:62px;text-align:center;">4</div>
<div class="cell" style="left:789px;top:429px;width:62px;text-align:center;letter-spacing:-0.119px;">010</div>
<div class="cell" style="left:852px;top:429px;width:62px;text-align:center;">1</div>
<div class="cell" style="left:914px;top:429px;width:160px;text-align:center;letter-spacing:0.048px;">8888010841</div>
<div class="cell" style="left:1076px;top:429px;width:110px;text-align:right;padding-right:3px;">1</div>
<div class="cell" style="left:1186px;top:429px;width:176.5px;text-align:center;letter-spacing:-0.151px;">FLANGE SCREW M12*60</div>
<div class="cell" style="left:1361px;top:429px;width:67px;text-align:center;letter-spacing:-0.246px;overflow:visible;">3DHT<span class="k" style="width:29.34px;font-size:14.67px">前驱</span></div>
<div class="cell" style="left:1427px;top:429px;width:61px;text-align:center;letter-spacing:0.223px;">each</div>
<div class="cell" style="left:1509px;top:429px;width:51px;text-align:left;">ST</div>
<div class="tri" style="left:788px;top:427px"></div>
<div class="tri" style="left:851px;top:427px"></div>
<div class="tri" style="left:914px;top:427px"></div>
<div class="hln" style="top:466px;left:695px;width:828px"></div>
<div class="rh" style="top:449px">5</div>
<div class="cell" style="left:726px;top:449px;width:62px;text-align:center;">5</div>
<div class="cell" style="left:789px;top:449px;width:62px;text-align:center;letter-spacing:-0.119px;">010</div>
<div class="cell" style="left:852px;top:449px;width:62px;text-align:center;">1</div>
<div class="cell" style="left:914px;top:449px;width:160px;text-align:center;letter-spacing:0.048px;">8888010841</div>
<div class="cell" style="left:1076px;top:449px;width:110px;text-align:right;padding-right:3px;">1</div>
<div class="cell" style="left:1186px;top:449px;width:176.5px;text-align:center;letter-spacing:-0.151px;">FLANGE SCREW M12*60</div>
<div class="cell" style="left:1363px;top:449px;width:62px;text-align:center;letter-spacing:0.538px;">4<span class="k" style="width:44.01px;font-size:14.67px">缸汽油</span></div>
<div class="cell" style="left:1427px;top:449px;width:61px;text-align:center;letter-spacing:0.223px;">each</div>
<div class="cell" style="left:1509px;top:449px;width:51px;text-align:left;">ST</div>
<div class="tri" style="left:788px;top:447px"></div>
<div class="tri" style="left:851px;top:447px"></div>
<div class="tri" style="left:914px;top:447px"></div>
<div class="hln" style="top:486px;left:695px;width:828px"></div>
<div class="rh" style="top:469px">6</div>
<div class="cell" style="left:726px;top:469px;width:62px;text-align:center;">6</div>
<div class="cell" style="left:789px;top:469px;width:62px;text-align:center;letter-spacing:-0.119px;">010</div>
<div class="cell" style="left:852px;top:469px;width:62px;text-align:center;">1</div>
<div class="cell" style="left:914px;top:469px;width:160px;text-align:center;letter-spacing:0.141px;">8888011427</div>
<div class="cell" style="left:1076px;top:469px;width:110px;text-align:right;padding-right:3px;">1</div>
<div class="cell" style="left:1186px;top:469px;width:176.5px;text-align:center;letter-spacing:-0.205px;">SEMS SCREW M12*55</div>
<div class="cell" style="left:1361px;top:469px;width:67px;text-align:center;letter-spacing:-0.246px;overflow:visible;">3DHT<span class="k" style="width:29.34px;font-size:14.67px">前驱</span></div>
<div class="cell" style="left:1427px;top:469px;width:61px;text-align:center;letter-spacing:0.223px;">each</div>
<div class="cell" style="left:1509px;top:469px;width:51px;text-align:left;">ST</div>
<div class="tri" style="left:788px;top:467px"></div>
<div class="tri" style="left:851px;top:467px"></div>
<div class="tri" style="left:914px;top:467px"></div>
<div class="hln" style="top:506px;left:695px;width:828px"></div>
<div class="rh" style="top:489px">7</div>
<div class="cell" style="left:726px;top:489px;width:62px;text-align:center;">7</div>
<div class="cell" style="left:789px;top:489px;width:62px;text-align:center;letter-spacing:-0.119px;">010</div>
<div class="cell" style="left:852px;top:489px;width:62px;text-align:center;">1</div>
<div class="cell" style="left:914px;top:489px;width:160px;text-align:center;letter-spacing:0.141px;">8888011427</div>
<div class="cell" style="left:1076px;top:489px;width:110px;text-align:right;padding-right:3px;">1</div>
<div class="cell" style="left:1186px;top:489px;width:176.5px;text-align:center;letter-spacing:-0.205px;">SEMS SCREW M12*55</div>
<div class="cell" style="left:1363px;top:489px;width:62px;text-align:center;letter-spacing:0.538px;">4<span class="k" style="width:44.01px;font-size:14.67px">缸汽油</span></div>
<div class="cell" style="left:1427px;top:489px;width:61px;text-align:center;letter-spacing:0.223px;">each</div>
<div class="cell" style="left:1509px;top:489px;width:51px;text-align:left;">ST</div>
<div class="tri" style="left:788px;top:487px"></div>
<div class="tri" style="left:851px;top:487px"></div>
<div class="tri" style="left:914px;top:487px"></div>
<div class="hln" style="top:526px;left:695px;width:828px"></div>
<div class="rh" style="top:509px">8</div>
<div class="cell" style="left:726px;top:509px;width:62px;text-align:center;">8</div>
<div class="cell" style="left:789px;top:509px;width:62px;text-align:center;letter-spacing:-0.119px;">010</div>
<div class="cell" style="left:852px;top:509px;width:62px;text-align:center;">1</div>
<div class="cell" style="left:914px;top:509px;width:160px;text-align:center;letter-spacing:0.141px;">8888011012</div>
<div class="cell" style="left:1076px;top:509px;width:110px;text-align:right;padding-right:3px;">1</div>
<div class="cell" style="left:1186px;top:509px;width:176.5px;text-align:center;letter-spacing:-0.151px;">FLANGE SCREW M10*50</div>
<div class="cell" style="left:1361px;top:509px;width:67px;text-align:center;letter-spacing:-0.246px;overflow:visible;">3DHT<span class="k" style="width:29.34px;font-size:14.67px">前驱</span></div>
<div class="cell" style="left:1427px;top:509px;width:61px;text-align:center;letter-spacing:0.223px;">each</div>
<div class="cell" style="left:1509px;top:509px;width:51px;text-align:left;">ST</div>
<div class="tri" style="left:788px;top:507px"></div>
<div class="tri" style="left:851px;top:507px"></div>
<div class="tri" style="left:914px;top:507px"></div>
<div class="hln" style="top:546px;left:695px;width:828px"></div>
<div class="rh" style="top:529px">9</div>
<div class="cell" style="left:726px;top:529px;width:62px;text-align:center;">9</div>
<div class="cell" style="left:789px;top:529px;width:62px;text-align:center;letter-spacing:-0.119px;">010</div>
<div class="cell" style="left:852px;top:529px;width:62px;text-align:center;">1</div>
<div class="cell" style="left:914px;top:529px;width:160px;text-align:center;letter-spacing:0.141px;">8888011012</div>
<div class="cell" style="left:1076px;top:529px;width:110px;text-align:right;padding-right:3px;">1</div>
<div class="cell" style="left:1186px;top:529px;width:176.5px;text-align:center;letter-spacing:-0.151px;">FLANGE SCREW M10*50</div>
<div class="cell" style="left:1363px;top:529px;width:62px;text-align:center;letter-spacing:0.538px;">4<span class="k" style="width:44.01px;font-size:14.67px">缸汽油</span></div>
<div class="cell" style="left:1427px;top:529px;width:61px;text-align:center;letter-spacing:0.223px;">each</div>
<div class="cell" style="left:1509px;top:529px;width:51px;text-align:left;">ST</div>
<div class="tri" style="left:788px;top:527px"></div>
<div class="tri" style="left:851px;top:527px"></div>
<div class="tri" style="left:914px;top:527px"></div>
<div class="hln" style="top:566px;left:695px;width:828px"></div>
<div class="rh" style="top:549px">10</div>
<div class="cell" style="left:726px;top:549px;width:62px;text-align:center;">10</div>
<div class="cell" style="left:789px;top:549px;width:62px;text-align:center;letter-spacing:-0.119px;">010</div>
<div class="cell" style="left:852px;top:549px;width:62px;text-align:center;">1</div>
<div class="cell" style="left:914px;top:549px;width:160px;text-align:center;letter-spacing:0.048px;">8894136452</div>
<div class="cell" style="left:1186px;top:549px;width:176.5px;text-align:center;letter-spacing:-0.053px;">ENGINE PAD-RH</div>
<div class="cell" style="left:1361px;top:549px;width:67px;text-align:center;letter-spacing:-0.246px;overflow:visible;">3DHT<span class="k" style="width:29.34px;font-size:14.67px">前驱</span></div>
<div class="cell" style="left:1427px;top:549px;width:61px;text-align:center;letter-spacing:0.223px;">each</div>
<div class="cell" style="left:1516.5px;top:549px;width:43.5px;text-align:left;">P</div>
<div class="tri" style="left:788px;top:547px"></div>
<div class="tri" style="left:851px;top:547px"></div>
<div class="tri" style="left:914px;top:547px"></div>
<div class="hln" style="top:586px;left:695px;width:828px"></div>
<div class="rh" style="top:569px">11</div>
<div class="cell" style="left:726px;top:569px;width:62px;text-align:center;">11</div>
<div class="cell" style="left:789px;top:569px;width:62px;text-align:center;letter-spacing:-0.119px;">010</div>
<div class="cell" style="left:852px;top:569px;width:62px;text-align:center;">1</div>
<div class="cell" style="left:914px;top:569px;width:160px;text-align:center;letter-spacing:0.048px;">8892101078</div>
<div class="cell" style="left:1076px;top:569px;width:110px;text-align:right;padding-right:3px;">1</div>
<div class="cell" style="left:1186px;top:569px;width:176.5px;text-align:center;letter-spacing:-0.053px;">ENGINE PAD-RH</div>
<div class="cell" style="left:1363px;top:569px;width:62px;text-align:center;letter-spacing:0.538px;">4<span class="k" style="width:44.01px;font-size:14.67px">缸汽油</span></div>
<div class="cell" style="left:1427px;top:569px;width:61px;text-align:center;letter-spacing:0.223px;">each</div>
<div class="cell" style="left:1516.5px;top:569px;width:43.5px;text-align:left;">P</div>
<div class="tri" style="left:788px;top:567px"></div>
<div class="tri" style="left:851px;top:567px"></div>
<div class="tri" style="left:914px;top:567px"></div>
<div class="hln" style="top:606px;left:695px;width:828px"></div>
<div class="rh" style="top:589px">12</div>
<div class="cell" style="left:726px;top:589px;width:62px;text-align:center;">12</div>
<div class="cell" style="left:789px;top:589px;width:62px;text-align:center;letter-spacing:-0.119px;">010</div>
<div class="cell" style="left:852px;top:589px;width:62px;text-align:center;">1</div>
<div class="cell" style="left:914px;top:589px;width:160px;text-align:center;letter-spacing:0.141px;">8888011427</div>
<div class="cell" style="left:1076px;top:589px;width:110px;text-align:right;padding-right:3px;">1</div>
<div class="cell" style="left:1186px;top:589px;width:176.5px;text-align:center;letter-spacing:-0.205px;">SEMS SCREW M12*55</div>
<div class="cell" style="left:1361px;top:589px;width:67px;text-align:center;letter-spacing:-0.246px;overflow:visible;">3DHT<span class="k" style="width:29.34px;font-size:14.67px">前驱</span></div>
<div class="cell" style="left:1427px;top:589px;width:61px;text-align:center;letter-spacing:0.223px;">each</div>
<div class="cell" style="left:1509px;top:589px;width:51px;text-align:left;">ST</div>
<div class="tri" style="left:788px;top:587px"></div>
<div class="tri" style="left:851px;top:587px"></div>
<div class="tri" style="left:914px;top:587px"></div>
<div class="hln" style="top:626px;left:695px;width:828px"></div>
<div class="rh" style="top:609px">13</div>
<div class="cell" style="left:726px;top:609px;width:62px;text-align:center;">13</div>
<div class="cell" style="left:789px;top:609px;width:62px;text-align:center;letter-spacing:-0.119px;">010</div>
<div class="cell" style="left:852px;top:609px;width:62px;text-align:center;">1</div>
<div class="cell" style="left:914px;top:609px;width:160px;text-align:center;letter-spacing:0.141px;">8888011427</div>
<div class="cell" style="left:1076px;top:609px;width:110px;text-align:right;padding-right:3px;">1</div>
<div class="cell" style="left:1186px;top:609px;width:176.5px;text-align:center;letter-spacing:-0.205px;">SEMS SCREW M12*55</div>
<div class="cell" style="left:1363px;top:609px;width:62px;text-align:center;letter-spacing:0.538px;">4<span class="k" style="width:44.01px;font-size:14.67px">缸汽油</span></div>
<div class="cell" style="left:1427px;top:609px;width:61px;text-align:center;letter-spacing:0.223px;">each</div>
<div class="cell" style="left:1509px;top:609px;width:51px;text-align:left;">ST</div>
<div class="tri" style="left:788px;top:607px"></div>
<div class="tri" style="left:851px;top:607px"></div>
<div class="tri" style="left:914px;top:607px"></div>
<div class="hln" style="top:646px;left:695px;width:828px"></div>
<div class="rh" style="top:629px">14</div>
<div class="cell" style="left:726px;top:629px;width:62px;text-align:center;">14</div>
<div class="cell" style="left:789px;top:629px;width:62px;text-align:center;letter-spacing:-0.119px;">010</div>
<div class="cell" style="left:852px;top:629px;width:62px;text-align:center;">1</div>
<div class="cell" style="left:914px;top:629px;width:160px;text-align:center;letter-spacing:0.048px;">8889479094</div>
<div class="cell" style="left:1076px;top:629px;width:110px;text-align:right;padding-right:3px;">1</div>
<div class="cell" style="left:1186px;top:629px;width:176.5px;text-align:center;letter-spacing:-0.151px;">FLANGE SCREW M12*80</div>
<div class="cell" style="left:1361px;top:629px;width:67px;text-align:center;letter-spacing:-0.246px;overflow:visible;">3DHT<span class="k" style="width:29.34px;font-size:14.67px">前驱</span></div>
<div class="cell" style="left:1427px;top:629px;width:61px;text-align:center;letter-spacing:0.223px;">each</div>
<div class="cell" style="left:1509px;top:629px;width:51px;text-align:left;">ST</div>
<div class="tri" style="left:788px;top:627px"></div>
<div class="tri" style="left:851px;top:627px"></div>
<div class="tri" style="left:914px;top:627px"></div>
<div class="hln" style="top:666px;left:695px;width:828px"></div>
<div class="rh" style="top:649px">15</div>
<div class="cell" style="left:726px;top:649px;width:62px;text-align:center;">15</div>
<div class="cell" style="left:789px;top:649px;width:62px;text-align:center;letter-spacing:-0.119px;">010</div>
<div class="cell" style="left:852px;top:649px;width:62px;text-align:center;">1</div>
<div class="cell" style="left:914px;top:649px;width:160px;text-align:center;letter-spacing:0.141px;">8888011593</div>
<div class="cell" style="left:1076px;top:649px;width:110px;text-align:right;padding-right:3px;">1</div>
<div class="cell" style="left:1186px;top:649px;width:176.5px;text-align:center;letter-spacing:-0.151px;">FLANGE SCREW M10*40</div>
<div class="cell" style="left:1363px;top:649px;width:62px;text-align:center;letter-spacing:0.538px;">4<span class="k" style="width:44.01px;font-size:14.67px">缸汽油</span></div>
<div class="cell" style="left:1427px;top:649px;width:61px;text-align:center;letter-spacing:0.223px;">each</div>
<div class="cell" style="left:1509px;top:649px;width:51px;text-align:left;">ST</div>
<div class="tri" style="left:788px;top:647px"></div>
<div class="tri" style="left:851px;top:647px"></div>
<div class="tri" style="left:914px;top:647px"></div>
<div class="hln" style="top:686px;left:695px;width:828px"></div>
<div class="rh" style="top:669px">16</div>
<div class="cell" style="left:726px;top:669px;width:62px;text-align:center;">16</div>
<div class="cell" style="left:789px;top:669px;width:62px;text-align:center;letter-spacing:-0.119px;">010</div>
<div class="cell" style="left:852px;top:669px;width:62px;text-align:center;">1</div>
<div class="cell" style="left:914px;top:669px;width:160px;text-align:center;letter-spacing:0.048px;">8889479094</div>
<div class="cell" style="left:1076px;top:669px;width:110px;text-align:right;padding-right:3px;">1</div>
<div class="cell" style="left:1186px;top:669px;width:176.5px;text-align:center;letter-spacing:-0.151px;">FLANGE SCREW M12*80</div>
<div class="cell" style="left:1363px;top:669px;width:62px;text-align:center;letter-spacing:0.538px;">4<span class="k" style="width:44.01px;font-size:14.67px">缸汽油</span></div>
<div class="cell" style="left:1427px;top:669px;width:61px;text-align:center;letter-spacing:0.223px;">each</div>
<div class="cell" style="left:1509px;top:669px;width:51px;text-align:left;">ST</div>
<div class="tri" style="left:788px;top:667px"></div>
<div class="tri" style="left:851px;top:667px"></div>
<div class="tri" style="left:914px;top:667px"></div>
<div class="hln" style="top:706px;left:695px;width:828px"></div>
<div class="rh" style="top:689px">17</div>
<div class="cell" style="left:726px;top:689px;width:62px;text-align:center;">17</div>
<div class="cell" style="left:789px;top:689px;width:62px;text-align:center;letter-spacing:-0.119px;">010</div>
<div class="cell" style="left:852px;top:689px;width:62px;text-align:center;">1</div>
<div class="cell" style="left:914px;top:689px;width:160px;text-align:center;letter-spacing:0.141px;">8888011427</div>
<div class="cell" style="left:1076px;top:689px;width:110px;text-align:right;padding-right:3px;">1</div>
<div class="cell" style="left:1186px;top:689px;width:176.5px;text-align:center;letter-spacing:-0.205px;">SEMS SCREW M12*55</div>
<div class="cell" style="left:1361px;top:689px;width:67px;text-align:center;letter-spacing:-0.246px;overflow:visible;">3DHT<span class="k" style="width:29.34px;font-size:14.67px">前驱</span></div>
<div class="cell" style="left:1427px;top:689px;width:61px;text-align:center;letter-spacing:0.223px;">each</div>
<div class="cell" style="left:1509px;top:689px;width:51px;text-align:left;">ST</div>
<div class="tri" style="left:788px;top:687px"></div>
<div class="tri" style="left:851px;top:687px"></div>
<div class="tri" style="left:914px;top:687px"></div>
<div class="hln" style="top:726px;left:695px;width:828px"></div>
<div class="rh" style="top:709px">18</div>
<div class="cell" style="left:726px;top:709px;width:62px;text-align:center;">18</div>
<div class="cell" style="left:789px;top:709px;width:62px;text-align:center;letter-spacing:-0.119px;">010</div>
<div class="cell" style="left:852px;top:709px;width:62px;text-align:center;">1</div>
<div class="cell" style="left:914px;top:709px;width:160px;text-align:center;letter-spacing:0.141px;">8888011427</div>
<div class="cell" style="left:1076px;top:709px;width:110px;text-align:right;padding-right:3px;">1</div>
<div class="cell" style="left:1186px;top:709px;width:176.5px;text-align:center;letter-spacing:-0.205px;">SEMS SCREW M12*55</div>
<div class="cell" style="left:1363px;top:709px;width:62px;text-align:center;letter-spacing:0.538px;">4<span class="k" style="width:44.01px;font-size:14.67px">缸汽油</span></div>
<div class="cell" style="left:1427px;top:709px;width:61px;text-align:center;letter-spacing:0.223px;">each</div>
<div class="cell" style="left:1509px;top:709px;width:51px;text-align:left;">ST</div>
<div class="tri" style="left:788px;top:707px"></div>
<div class="tri" style="left:851px;top:707px"></div>
<div class="tri" style="left:914px;top:707px"></div>
<div class="hln" style="top:746px;left:695px;width:828px"></div>
<div class="rh" style="top:729px">19</div>
<div class="cell" style="left:726px;top:729px;width:62px;text-align:center;">19</div>
<div class="cell" style="left:789px;top:729px;width:62px;text-align:center;letter-spacing:-0.119px;">010</div>
<div class="cell" style="left:852px;top:729px;width:62px;text-align:center;">1</div>
<div class="cell" style="left:914px;top:729px;width:160px;text-align:center;letter-spacing:0.048px;">8894136459</div>
<div class="cell" style="left:1186px;top:729px;width:177px"><div style="position:absolute;left:-15.7px;top:0;text-align:left;letter-spacing:-0.412px">BRACKET-ENGINE MOUNTING RR LH</div></div>
<div class="cell" style="left:1361px;top:729px;width:67px;text-align:center;letter-spacing:-0.246px;overflow:visible;">3DHT<span class="k" style="width:29.34px;font-size:14.67px">前驱</span></div>
<div class="cell" style="left:1427px;top:729px;width:61px;text-align:center;letter-spacing:0.223px;">each</div>
<div class="cell" style="left:1516.5px;top:729px;width:43.5px;text-align:left;">P</div>
<div class="tri" style="left:788px;top:727px"></div>
<div class="tri" style="left:851px;top:727px"></div>
<div class="tri" style="left:914px;top:727px"></div>
<div class="hln" style="top:766px;left:695px;width:828px"></div>
<div class="rh" style="top:749px">20</div>
<div class="cell" style="left:726px;top:749px;width:62px;text-align:center;">20</div>
<div class="cell" style="left:789px;top:749px;width:62px;text-align:center;letter-spacing:-0.119px;">010</div>
<div class="cell" style="left:852px;top:749px;width:62px;text-align:center;">1</div>
<div class="cell" style="left:914px;top:749px;width:160px;text-align:center;letter-spacing:-0.225px;">JQ1841250TF6A1</div>
<div class="cell" style="left:1186px;top:749px;width:177px"><div style="position:absolute;left:-6px;top:0;text-align:left;letter-spacing:-0.293px">HEXAGON_BOLT_WITH_COLLAR</div></div>
<div class="cell" style="left:1361px;top:749px;width:67px;text-align:center;letter-spacing:-0.246px;overflow:visible;">3DHT<span class="k" style="width:29.34px;font-size:14.67px">前驱</span></div>
<div class="cell" style="left:1427px;top:749px;width:61px;text-align:center;letter-spacing:0.223px;">each</div>
<div class="cell" style="left:1509px;top:749px;width:51px;text-align:left;">ST</div>
<div class="tri" style="left:788px;top:747px"></div>
<div class="tri" style="left:851px;top:747px"></div>
<div class="tri" style="left:914px;top:747px"></div>
<div class="hln" style="top:786px;left:695px;width:828px"></div>
<div class="rh" style="top:769px">21</div>
<div class="cell" style="left:726px;top:769px;width:62px;text-align:center;">21</div>
<div class="cell" style="left:789px;top:769px;width:62px;text-align:center;letter-spacing:-0.119px;">010</div>
<div class="cell" style="left:852px;top:769px;width:62px;text-align:center;">1</div>
<div class="cell" style="left:914px;top:769px;width:160px;text-align:center;letter-spacing:0.048px;">8890264133</div>
<div class="cell" style="left:1076px;top:769px;width:110px;text-align:right;padding-right:3px;">1</div>
<div class="cell" style="left:1186px;top:769px;width:177px"><div style="position:absolute;left:-8.5px;top:0;text-align:left;letter-spacing:-0.365px">BRACKET-ENGINE MOUNTING RR</div></div>
<div class="cell" style="left:1363px;top:769px;width:62px;text-align:center;"><span class="k" style="width:29.34px;font-size:14.67px">通用</span></div>
<div class="cell" style="left:1427px;top:769px;width:61px;text-align:center;letter-spacing:0.223px;">each</div>
<div class="cell" style="left:1516.5px;top:769px;width:43.5px;text-align:left;">P</div>
<div class="tri" style="left:788px;top:767px"></div>
<div class="tri" style="left:851px;top:767px"></div>
<div class="tri" style="left:914px;top:767px"></div>
<div class="hln" style="top:806px;left:695px;width:828px"></div>
<div class="rh" style="top:789px">22</div>
<div class="cell" style="left:726px;top:789px;width:62px;text-align:center;">22</div>
<div class="cell" style="left:789px;top:789px;width:62px;text-align:center;letter-spacing:-0.119px;">010</div>
<div class="cell" style="left:852px;top:789px;width:62px;text-align:center;">1</div>
<div class="cell" style="left:914px;top:789px;width:160px;text-align:center;letter-spacing:0.048px;">8891686769</div>
<div class="cell" style="left:1076px;top:789px;width:110px;text-align:right;padding-right:3px;">1</div>
<div class="cell" style="left:1186px;top:789px;width:177px"><div style="position:absolute;left:-8.5px;top:0;text-align:left;letter-spacing:-0.365px">BRACKET-ENGINE MOUNTING RR</div></div>
<div class="cell" style="left:1363px;top:789px;width:62px;text-align:center;"><span class="k" style="width:29.34px;font-size:14.67px">通用</span></div>
<div class="cell" style="left:1427px;top:789px;width:61px;text-align:center;letter-spacing:0.223px;">each</div>
<div class="cell" style="left:1516.5px;top:789px;width:43.5px;text-align:left;">P</div>
<div class="tri" style="left:788px;top:787px"></div>
<div class="tri" style="left:851px;top:787px"></div>
<div class="tri" style="left:914px;top:787px"></div>
<div class="hln" style="top:826px;left:695px;width:828px"></div>
<div class="rh" style="top:809px">23</div>
<div class="cell" style="left:726px;top:809px;width:62px;text-align:center;">23</div>
<div class="cell" style="left:789px;top:809px;width:62px;text-align:center;letter-spacing:-0.119px;">010</div>
<div class="cell" style="left:852px;top:809px;width:62px;text-align:center;">1</div>
<div class="cell" style="left:914px;top:809px;width:160px;text-align:center;letter-spacing:0.048px;">8888010147</div>
<div class="cell" style="left:1076px;top:809px;width:110px;text-align:right;padding-right:3px;">1</div>
<div class="cell" style="left:1186px;top:809px;width:176.5px;text-align:center;letter-spacing:-0.151px;">FLANGE SCREW M12*70</div>
<div class="cell" style="left:1361px;top:809px;width:67px;text-align:center;letter-spacing:-0.246px;overflow:visible;">3DHT<span class="k" style="width:29.34px;font-size:14.67px">前驱</span></div>
<div class="cell" style="left:1427px;top:809px;width:61px;text-align:center;letter-spacing:0.223px;">each</div>
<div class="cell" style="left:1509px;top:809px;width:51px;text-align:left;">ST</div>
<div class="tri" style="left:788px;top:807px"></div>
<div class="tri" style="left:851px;top:807px"></div>
<div class="tri" style="left:914px;top:807px"></div>
<div class="hln" style="top:846px;left:695px;width:828px"></div>
<div class="rh" style="top:829px">24</div>
<div class="cell" style="left:726px;top:829px;width:62px;text-align:center;">24</div>
<div class="cell" style="left:789px;top:829px;width:62px;text-align:center;letter-spacing:-0.119px;">010</div>
<div class="cell" style="left:852px;top:829px;width:62px;text-align:center;">1</div>
<div class="cell" style="left:914px;top:829px;width:160px;text-align:center;letter-spacing:0.048px;">8888010147</div>
<div class="cell" style="left:1076px;top:829px;width:110px;text-align:right;padding-right:3px;">1</div>
<div class="cell" style="left:1186px;top:829px;width:176.5px;text-align:center;letter-spacing:-0.151px;">FLANGE SCREW M12*70</div>
<div class="cell" style="left:1363px;top:829px;width:62px;text-align:center;letter-spacing:0.538px;">4<span class="k" style="width:44.01px;font-size:14.67px">缸汽油</span></div>
<div class="cell" style="left:1427px;top:829px;width:61px;text-align:center;letter-spacing:0.223px;">each</div>
<div class="cell" style="left:1509px;top:829px;width:51px;text-align:left;">ST</div>
<div class="tri" style="left:788px;top:827px"></div>
<div class="tri" style="left:851px;top:827px"></div>
<div class="tri" style="left:914px;top:827px"></div>
<div class="hln" style="top:866px;left:695px;width:828px"></div>
<div class="rh" style="top:849px">25</div>
<div class="cell" style="left:726px;top:849px;width:62px;text-align:center;">25</div>
<div class="cell" style="left:789px;top:849px;width:62px;text-align:center;letter-spacing:-0.119px;">010</div>
<div class="cell" style="left:852px;top:849px;width:62px;text-align:center;">1</div>
<div class="cell" style="left:914px;top:849px;width:160px;text-align:center;letter-spacing:0.048px;">8892821495</div>
<div class="cell" style="left:1186px;top:849px;width:176.5px;text-align:center;letter-spacing:-0.39px;">BRACKET-TIE BAR RR LH LWR</div>
<div class="cell" style="left:1361px;top:849px;width:67px;text-align:center;letter-spacing:-0.246px;overflow:visible;">3DHT<span class="k" style="width:29.34px;font-size:14.67px">前驱</span></div>
<div class="cell" style="left:1427px;top:849px;width:61px;text-align:center;letter-spacing:0.223px;">each</div>
<div class="cell" style="left:1510.5px;top:849px;width:49.5px;text-align:left;">DU</div>
<div class="tri" style="left:788px;top:847px"></div>
<div class="tri" style="left:851px;top:847px"></div>
<div class="tri" style="left:914px;top:847px"></div>
<div class="a" style="left:695px;top:388px;width:18px;height:476px;background:linear-gradient(to right,#f4f6f9 15%,rgba(244,246,249,0))"></div>
<div class="vl" style="left:724px;top:387px;height:480px"></div>
<div class="vl" style="left:787px;top:387px;height:480px"></div>
<div class="vl" style="left:850px;top:387px;height:480px"></div>
<div class="vl" style="left:913px;top:387px;height:480px"></div>
<div class="vl" style="left:1074px;top:387px;height:480px"></div>
<div class="vl" style="left:1185px;top:387px;height:480px"></div>
<div class="vl" style="left:1425px;top:387px;height:480px"></div>
<div class="vl" style="left:1488px;top:387px;height:480px"></div>
<div class="vl" style="left:1362px;top:407px;height:20px"></div>
<div class="vl" style="left:1362px;top:447px;height:20px"></div>
<div class="vl" style="left:1362px;top:487px;height:20px"></div>
<div class="vl" style="left:1362px;top:527px;height:20px"></div>
<div class="vl" style="left:1362px;top:567px;height:20px"></div>
<div class="vl" style="left:1362px;top:607px;height:20px"></div>
<div class="vl" style="left:1362px;top:647px;height:20px"></div>
<div class="vl" style="left:1362px;top:667px;height:20px"></div>
<div class="vl" style="left:1362px;top:707px;height:20px"></div>
<div class="vl" style="left:1362px;top:767px;height:20px"></div>
<div class="vl" style="left:1362px;top:787px;height:20px"></div>
<div class="vl" style="left:1362px;top:827px;height:20px"></div>
<div class="hln" style="left:1075px;width:110px;top:386px"></div>
<div class="a" style="left:789px;top:386px;width:286px;height:1px;background:#000"></div>
<div class="a" style="left:1185px;top:386px;width:340px;height:1px;background:#000"></div>
<div class="a" style="left:723px;top:206px;width:66px;height:182px;border:3px solid #1fb978"></div>
<div class="a" style="left:784px;top:383px;width:6px;height:6px;background:#1fb978;border-left:1px solid #fff;border-top:1px solid #fff"></div>
<div class="a" style="left:695px;top:864px;width:828px;height:22px;background:#f4f5f8"></div>
<div class="a" style="left:814px;top:864px;width:239px;height:22px;background:#e4e6ec"></div>
<div class="a" style="left:1053px;top:864px;width:159px;height:22px;background:#fff"></div>
<div class="a" style="left:1212px;top:864px;width:320px;height:22px;background:#e4e6ec"></div>
<div class="t" style="left:833px;top:868px;font-size:12px;line-height:17px;height:17px;letter-spacing:0.634px;color:#5f6470;"><span class="k" style="width:24px">工程</span>BOM-150%(<span class="k" style="width:24px">标配</span>+<span class="k" style="width:72px">选装非实例化</span>)</div>
<div class="t" style="left:1070px;top:868px;font-size:12px;line-height:17px;height:17px;letter-spacing:0.042px;font-weight:bold;color:#1eb071;">KX11-A3_VS_KX11-A5</div>
<div class="t" style="left:1232px;top:868px;font-size:12px;line-height:17px;height:17px;letter-spacing:0.076px;color:#5f6470;">KX11-A5_VS_KX11-A3</div>
<div class="t" style="left:1391.5px;top:868px;font-size:12px;line-height:17px;height:17px;letter-spacing:-0.503px;color:#5f6470;"><span class="k" style="width:24px">工程</span>BOM-100%(<span class="k" style="width:24px">标配</span>+<span class="k" style="width:24px">选装</span></div>
<svg style="left:0;top:0" width="1523" height="908"><path d="M711.500 870V881M719.500 870L714 875.500L719.500 881M744.500 870L739 875.500L744.500 881M763 870L768.500 875.500L763 881M788 870L793.500 875.500L788 881M796.500 870V881" stroke="#a3a7b0" stroke-width="1.100"/></svg>
<div class="a" style="left:695px;top:886px;width:828px;height:22px;background:#f3f4f7;border-top:1px solid #e4e6ea"></div>
<div class="a" style="left:742px;top:893px;width:1px;height:14px;background:#dcdfe4"></div>
<svg style="left:0;top:0" width="1523" height="908"><path d="M722.500 893.500H711.500V902.500H716.500M723.500 898.500V894.500Q724.600 893.200 725.800 894.500V898.500" stroke="#3a3f4a" stroke-width="1.100"/></svg>
<div class="t" style="left:717.5px;top:899px;font-size:9px;line-height:10px;height:10px;color:#2b303b;font-style:italic;">JS</div>
</div></div>
</body></html>
